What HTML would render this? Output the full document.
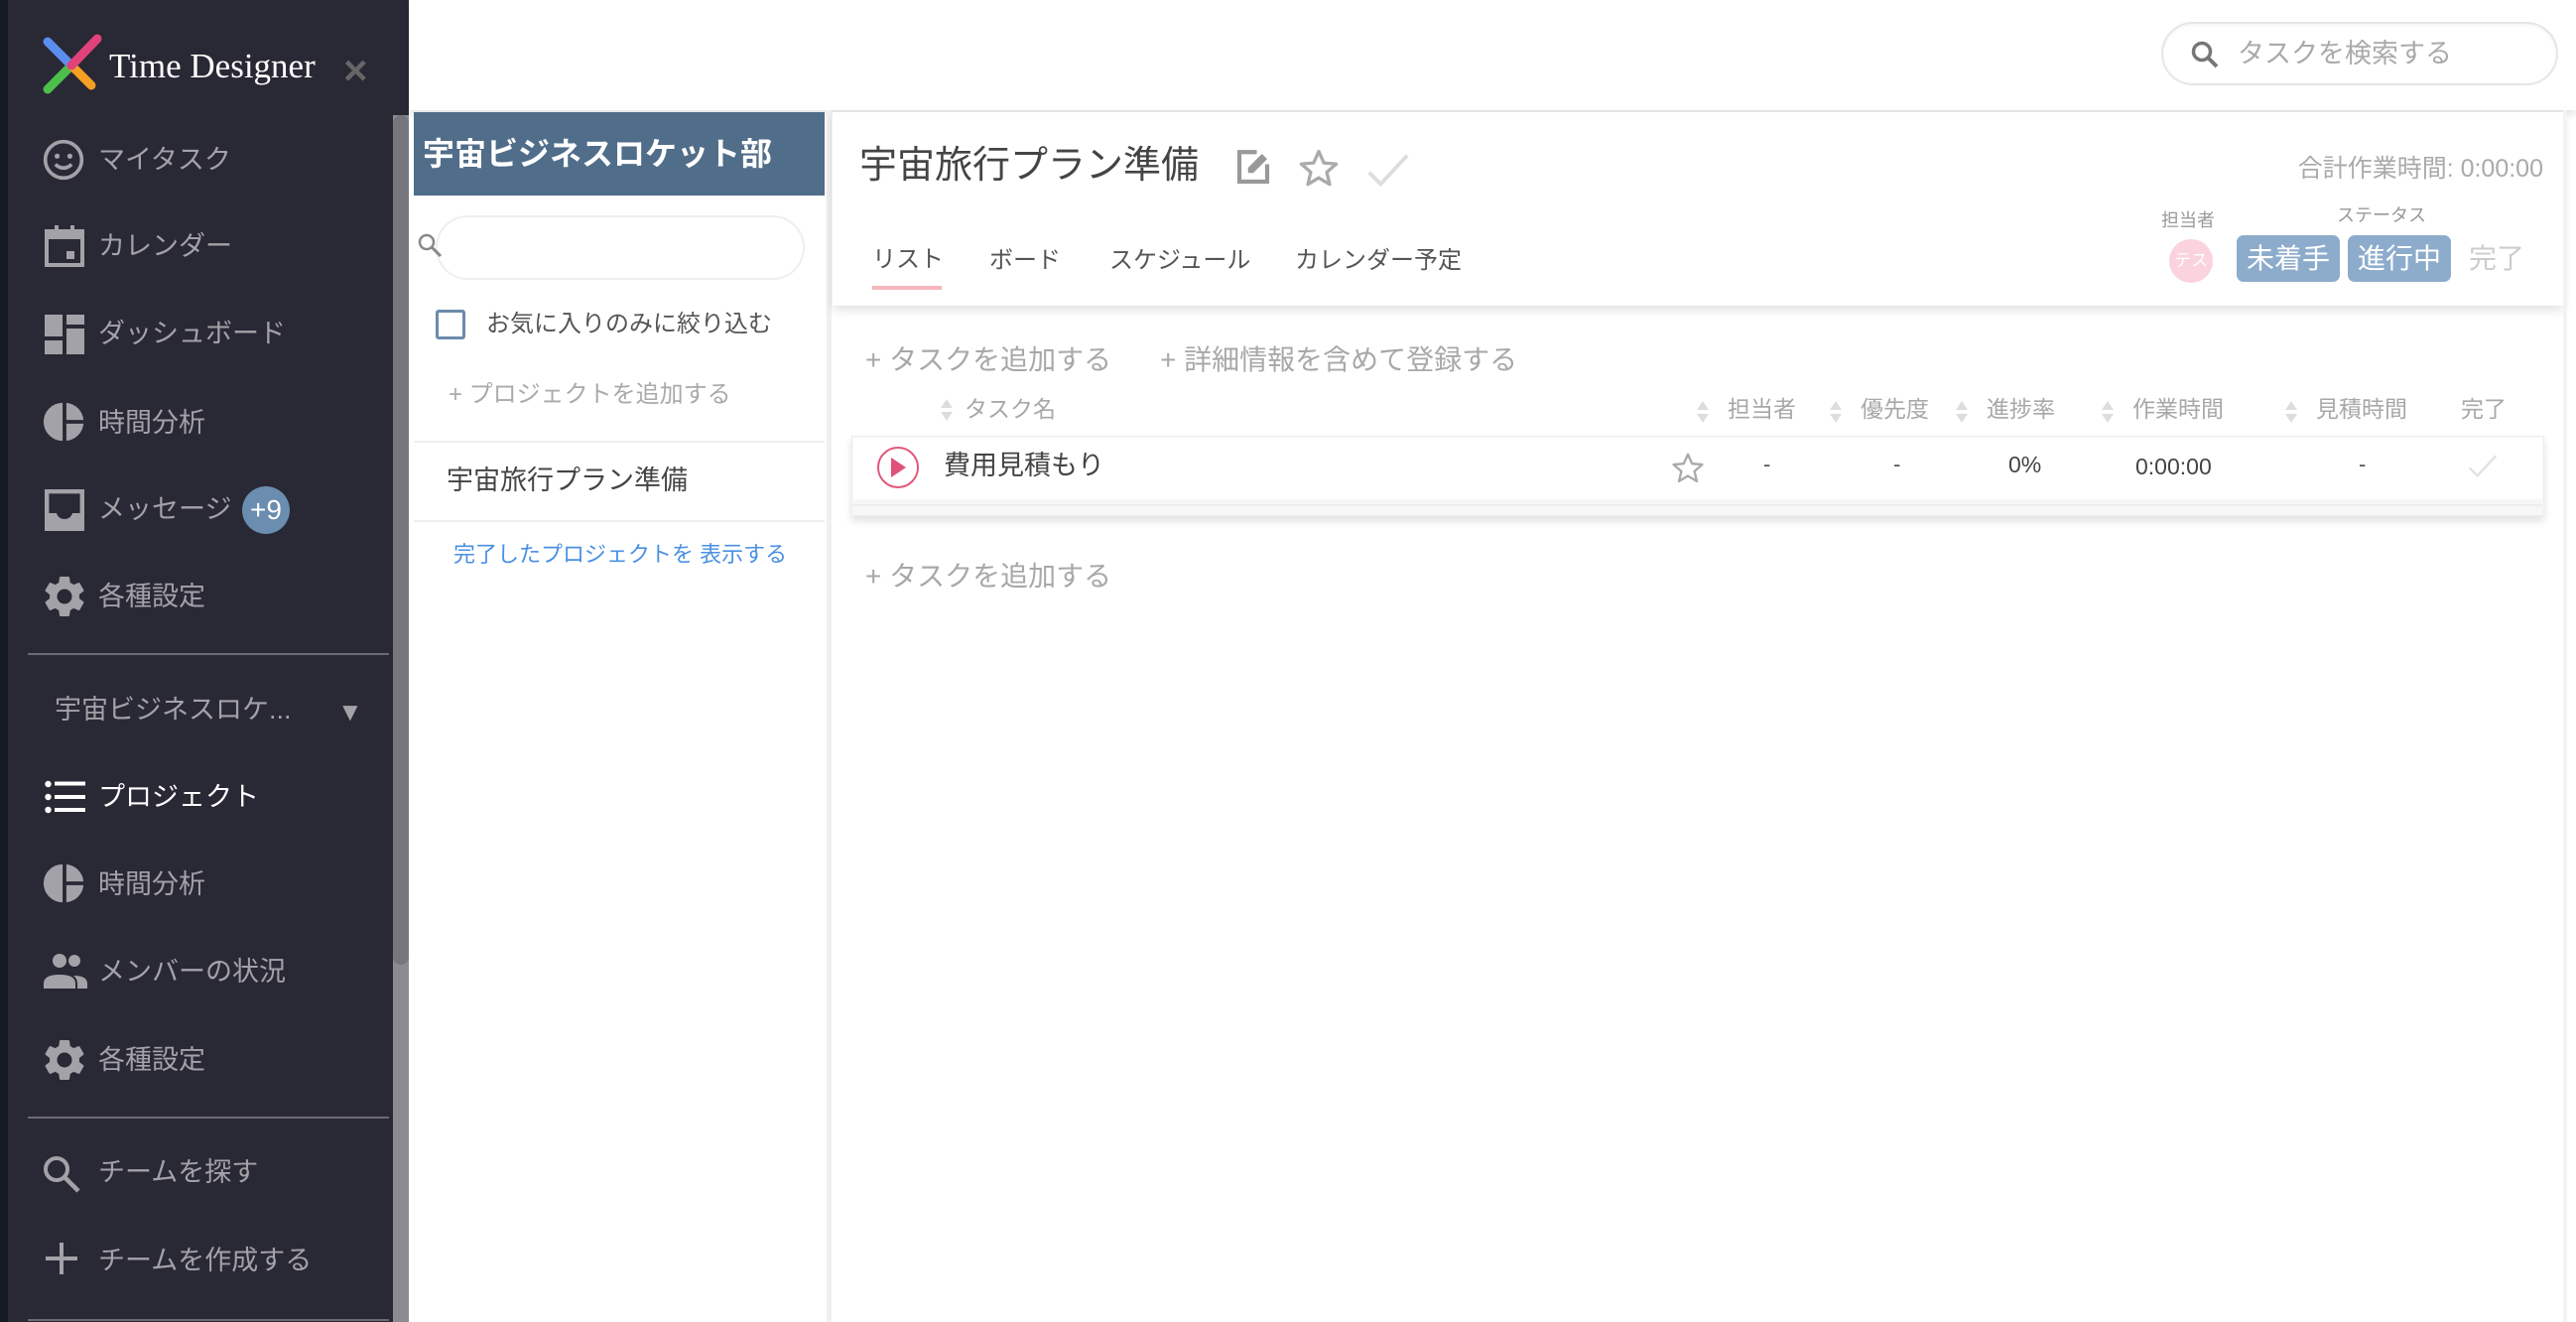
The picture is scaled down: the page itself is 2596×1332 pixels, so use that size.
<!DOCTYPE html>
<html><head><meta charset="utf-8">
<style>
*{margin:0;padding:0;box-sizing:border-box}
body{width:2596px;height:1332px;overflow:hidden;background:#fff;position:relative;font-family:"Liberation Sans","Noto Sans CJK JP",sans-serif}
.a{position:absolute;white-space:nowrap;line-height:1}
.side{position:absolute;left:0;top:0;width:412px;height:1332px;background:#292835}
.strip{position:absolute;left:0;top:0;width:8px;height:1332px;background:#151a24}
.mi{color:#a3a2a8;font-size:27px}
.ic{position:absolute}
.g{color:#a8a8a8}
.sort{position:absolute;width:14px;height:26px}
</style></head><body>
<div class="side"></div><div class="strip"></div>
<div class="a" style="left:396px;top:116px;width:16px;height:1216px;background:#8c8b91"></div>
<div class="a" style="left:396px;top:116px;width:16px;height:856px;background:#77767d;border-radius:8px"></div>
<svg class="ic" style="left:40px;top:34px" width="66" height="64" viewBox="0 0 66 64">
<line x1="8" y1="56" x2="32" y2="32" stroke="#4cc04a" stroke-width="9" stroke-linecap="round"/>
<line x1="8" y1="8" x2="32" y2="32" stroke="#5b8def" stroke-width="9" stroke-linecap="round"/>
<line x1="32" y1="32" x2="52" y2="52" stroke="#f5a023" stroke-width="9" stroke-linecap="round"/>
<line x1="32" y1="32" x2="58" y2="5" stroke="#e0427a" stroke-width="9" stroke-linecap="round"/>
</svg>
<div class="a" style="left:110px;top:49px;font-family:'Liberation Serif',serif;font-size:35px;color:#fff">Time Designer</div>
<div class="a" style="left:346px;top:50px;font-size:42px;color:#666;font-weight:bold">×</div>
<svg class="ic" style="left:42px;top:139px" width="44" height="44" viewBox="0 0 24 24"><circle cx="12" cy="12" r="10" fill="none" stroke="#a3a2a8" stroke-width="2"/><circle cx="8.5" cy="10" r="1.4" fill="#a3a2a8"/><circle cx="15.5" cy="10" r="1.4" fill="#a3a2a8"/><path d="M7.5 14.5q4.5 4 9 0" stroke="#a3a2a8" stroke-width="2" fill="none"/></svg>
<div class="a mi" style="left:99px;top:148px">マイタスク</div>
<svg class="ic" style="left:45px;top:227px" width="40" height="42" viewBox="0 0 20 21"><rect x="1" y="3" width="18" height="17" fill="none" stroke="#a3a2a8" stroke-width="2"/><rect x="1" y="3" width="18" height="4" fill="#a3a2a8"/><rect x="5" y="0" width="2" height="4" fill="#a3a2a8"/><rect x="13" y="0" width="2" height="4" fill="#a3a2a8"/><rect x="11" y="13" width="4" height="4" fill="#a3a2a8"/></svg>
<div class="a mi" style="left:99px;top:235px">カレンダー</div>
<svg class="ic" style="left:45px;top:317px" width="40" height="40" viewBox="0 0 20 20" fill="#a3a2a8"><rect x="0" y="0" width="9" height="11"/><rect x="11" y="0" width="9" height="5"/><rect x="11" y="7" width="9" height="13"/><rect x="0" y="13" width="9" height="7"/></svg>
<div class="a mi" style="left:99px;top:323px">ダッシュボード</div>
<svg class="ic" style="left:42px;top:402px" width="46" height="46" viewBox="0 0 24 24" fill="#a3a2a8"><path d="M11 2v20A10 10 0 0 1 11 2z"/><path d="M13 2A10 10 0 0 1 22 11h-9z"/><path d="M13 13h9A10 10 0 0 1 13 22z"/></svg>
<div class="a mi" style="left:99px;top:413px">時間分析</div>
<svg class="ic" style="left:45px;top:493px" width="40" height="42" viewBox="0 0 20 21"><path d="M1 1h18v19H1z" fill="none" stroke="#a3a2a8" stroke-width="2.4"/><path d="M1 12h5q1 3 4 3t4-3h5v8H1z" fill="#a3a2a8"/></svg>
<div class="a mi" style="left:99px;top:500px">メッセージ</div>
<div class="a" style="left:244px;top:490px;width:48px;height:48px;border-radius:50%;background:#6a8db0;color:#fff;font-size:28px;text-align:center;line-height:48px">+9</div>
<svg class="ic" style="left:40px;top:576px" width="50" height="50" viewBox="0 0 24 24" fill="#a3a2a8"><path d="M19.14 12.94a7.1 7.1 0 0 0 0-1.88l2.03-1.58a.5.5 0 0 0 .12-.61l-1.92-3.32a.5.5 0 0 0-.59-.22l-2.39.96a7 7 0 0 0-1.62-.94l-.36-2.54A.5.5 0 0 0 13.92 2.4h-3.84a.5.5 0 0 0-.49.42l-.36 2.54a7.4 7.4 0 0 0-1.62.94l-2.39-.96a.5.5 0 0 0-.59.22L2.71 8.88a.5.5 0 0 0 .12.61l2.03 1.58a7.1 7.1 0 0 0 0 1.88l-2.03 1.58a.5.5 0 0 0-.12.61l1.92 3.32a.5.5 0 0 0 .59.22l2.39-.96c.5.38 1.04.7 1.62.94l.36 2.54a.5.5 0 0 0 .49.42h3.84a.5.5 0 0 0 .49-.42l.36-2.54a7.4 7.4 0 0 0 1.62-.94l2.39.96a.5.5 0 0 0 .59-.22l1.92-3.32a.5.5 0 0 0-.12-.61zM12 15.6a3.6 3.6 0 1 1 0-7.2 3.6 3.6 0 0 1 0 7.2z"/></svg>
<div class="a mi" style="left:99px;top:588px">各種設定</div>
<div class="a" style="left:28px;top:658px;width:364px;height:2px;background:#6c6b72"></div>
<div class="a mi" style="left:55px;top:702px">宇宙ビジネスロケ...</div>
<div class="a" style="left:340px;top:704px;font-size:26px;color:#a3a2a8">▼</div>
<svg class="ic" style="left:45px;top:786px" width="42" height="34" viewBox="0 0 42 34" fill="#fff"><circle cx="3.5" cy="4" r="3.2"/><circle cx="3.5" cy="17" r="3.2"/><circle cx="3.5" cy="30" r="3.2"/><rect x="10" y="1.5" width="31" height="4"/><rect x="10" y="15" width="31" height="4"/><rect x="10" y="28" width="31" height="4"/></svg>
<div class="a mi" style="left:99px;top:790px;color:#fff">プロジェクト</div>
<svg class="ic" style="left:42px;top:867px" width="46" height="46" viewBox="0 0 24 24" fill="#a3a2a8"><path d="M11 2v20A10 10 0 0 1 11 2z"/><path d="M13 2A10 10 0 0 1 22 11h-9z"/><path d="M13 13h9A10 10 0 0 1 13 22z"/></svg>
<div class="a mi" style="left:99px;top:878px">時間分析</div>
<svg class="ic" style="left:43px;top:960px" width="46" height="36" viewBox="0 0 46 36" fill="#a3a2a8"><circle cx="17" cy="8" r="7"/><circle cx="32" cy="8" r="6"/><path d="M1 36v-5q0-9 16-9t16 9v5z"/><path d="M35 36v-5q0-5-4-8 14 0 14 8v5z"/></svg>
<div class="a mi" style="left:99px;top:966px">メンバーの状況</div>
<svg class="ic" style="left:40px;top:1043px" width="50" height="50" viewBox="0 0 24 24" fill="#a3a2a8"><path d="M19.14 12.94a7.1 7.1 0 0 0 0-1.88l2.03-1.58a.5.5 0 0 0 .12-.61l-1.92-3.32a.5.5 0 0 0-.59-.22l-2.39.96a7 7 0 0 0-1.62-.94l-.36-2.54A.5.5 0 0 0 13.920 2.4h-3.84a.5.5 0 0 0-.49.42l-.36 2.54a7.4 7.4 0 0 0-1.62.94l-2.39-.96a.5.5 0 0 0-.59.22L2.71 8.88a.5.5 0 0 0 .12.61l2.03 1.58a7.1 7.1 0 0 0 0 1.88l-2.03 1.58a.5.5 0 0 0-.12.61l1.92 3.32a.5.5 0 0 0 .59.22l2.39-.96c.5.38 1.04.7 1.62.94l.36 2.54a.5.5 0 0 0 .49.42h3.84a.5.5 0 0 0 .49-.42l.36-2.54a7.4 7.4 0 0 0 1.62-.94l2.39.96a.5.5 0 0 0 .59-.22l1.92-3.32a.5.5 0 0 0-.12-.61zM12 15.6a3.6 3.6 0 1 1 0-7.2 3.6 3.6 0 0 1 0 7.2z"/></svg>
<div class="a mi" style="left:99px;top:1055px">各種設定</div>
<div class="a" style="left:28px;top:1125px;width:364px;height:2px;background:#6c6b72"></div>
<svg class="ic" style="left:42px;top:1163px" width="40" height="40" viewBox="0 0 40 40"><circle cx="15" cy="15" r="11" fill="none" stroke="#a3a2a8" stroke-width="4"/><line x1="23" y1="23" x2="37" y2="37" stroke="#a3a2a8" stroke-width="4.5"/></svg>
<div class="a mi" style="left:99px;top:1168px">チームを探す</div>
<svg class="ic" style="left:46px;top:1252px" width="32" height="32" viewBox="0 0 32 32" fill="#a3a2a8"><rect x="14" y="0" width="4" height="32"/><rect x="0" y="14" width="32" height="4"/></svg>
<div class="a mi" style="left:99px;top:1257px">チームを作成する</div>
<div class="a" style="left:28px;top:1329px;width:364px;height:2px;background:#6c6b72"></div>

<div class="a" style="left:412px;top:0;width:2184px;height:111px;background:#fff;box-shadow:0 4px 8px rgba(0,0,0,.12)"></div>
<div class="a" style="left:2178px;top:22px;width:400px;height:64px;border:2px solid #e6e6e6;border-radius:32px;box-shadow:inset 0 1px 3px rgba(0,0,0,.06)"></div>
<svg class="ic" style="left:2207px;top:40px" width="30" height="30" viewBox="0 0 30 30"><circle cx="12" cy="12" r="8.5" fill="none" stroke="#777" stroke-width="3.5"/><line x1="18" y1="18" x2="27" y2="27" stroke="#777" stroke-width="4"/></svg>
<div class="a" style="left:2255px;top:41px;font-size:27px;color:#aaa">タスクを検索する</div>

<div class="a" style="left:417px;top:113px;width:414px;height:84px;background:#506d89"></div>
<div class="a" style="left:426px;top:139px;font-size:32px;font-weight:bold;color:#fff">宇宙ビジネスロケット部</div>
<div class="a" style="left:439px;top:217px;width:372px;height:65px;border:2px solid #eee;border-radius:33px"></div>
<svg class="ic" style="left:420px;top:234px" width="30" height="30" viewBox="0 0 30 30"><circle cx="10" cy="10" r="7" fill="none" stroke="#888" stroke-width="2.5"/><line x1="15" y1="15" x2="24" y2="24" stroke="#888" stroke-width="3"/></svg>
<div class="a" style="left:439px;top:312px;width:30px;height:30px;border:3px solid #6c8bab;border-radius:3px"></div>
<div class="a" style="left:490px;top:315px;font-size:24px;color:#555">お気に入りのみに絞り込む</div>
<div class="a" style="left:452px;top:386px;font-size:24px;color:#aaa">+ プロジェクトを追加する</div>
<div class="a" style="left:417px;top:444px;width:414px;height:2px;background:#eee"></div>
<div class="a" style="left:450px;top:471px;font-size:27px;color:#444">宇宙旅行プラン準備</div>
<div class="a" style="left:417px;top:524px;width:414px;height:2px;background:#eee"></div>
<div class="a" style="left:457px;top:548px;font-size:22px;color:#4a90e2">完了したプロジェクトを 表示する</div>
<div class="a" style="left:833px;top:111px;width:5px;height:1221px;background:#f0f0f0"></div>

<div class="a" style="left:839px;top:113px;width:1744px;height:195px;background:#fff;box-shadow:0 4px 10px rgba(0,0,0,.13)"></div>
<div class="a" style="left:2583px;top:111px;width:4px;height:1221px;background:#f3f3f3"></div>
<div class="a" style="left:866px;top:148px;font-size:38px;color:#444">宇宙旅行プラン準備</div>
<svg class="ic" style="left:1242px;top:148px" width="42" height="42" viewBox="0 0 24 24"><path d="M14 3H4v17h16V10" fill="none" stroke="#999" stroke-width="2.4"/><path d="M9 15v-3l8-8 3 3-8 8z" fill="#999"/></svg>
<svg class="ic" style="left:1306px;top:148px" width="46" height="44" viewBox="0 0 24 24"><path d="M12 2.5l2.8 6.3 6.8.6-5.2 4.5 1.6 6.7L12 17l-6 3.6 1.6-6.7L2.4 9.4l6.8-.6z" fill="none" stroke="#aaa" stroke-width="1.8" stroke-linejoin="round"/></svg>
<svg class="ic" style="left:1376px;top:152px" width="46" height="40" viewBox="0 0 24 20"><path d="M2 11l6 6L22 2" fill="none" stroke="#ddd" stroke-width="2"/></svg>
<div class="a" style="left:2250px;top:158px;width:313px;text-align:right;font-size:25px;color:#aaa">合計作業時間: 0:00:00</div>
<div class="a" style="left:879px;top:250px;font-size:24px;color:#555">リスト</div>
<div class="a" style="left:879px;top:288px;width:70px;height:4px;background:#f5b6be"></div>
<div class="a" style="left:997px;top:251px;font-size:24px;color:#555">ボード</div>
<div class="a" style="left:1118px;top:251px;font-size:24px;color:#555">スケジュール</div>
<div class="a" style="left:1305px;top:251px;font-size:24px;color:#555">カレンダー予定</div>
<div class="a" style="left:2178px;top:213px;font-size:18px;color:#999">担当者</div>
<div class="a" style="left:2355px;top:208px;font-size:18px;color:#999">ステータス</div>
<div class="a" style="left:2186px;top:241px;width:44px;height:44px;border-radius:50%;background:#fad3de;color:#fff;font-size:17px;text-align:center;line-height:44px">テス</div>
<div class="a" style="left:2254px;top:237px;width:104px;height:47px;border-radius:7px;background:#8daccc;color:#fff;font-size:28px;text-align:center;line-height:47px">未着手</div>
<div class="a" style="left:2366px;top:237px;width:104px;height:47px;border-radius:7px;background:#8daccc;color:#fff;font-size:28px;text-align:center;line-height:47px">進行中</div>
<div class="a" style="left:2488px;top:247px;font-size:28px;color:#ccc">完了</div>

<div class="a g" style="left:872px;top:349px;font-size:28px">+ タスクを追加する</div>
<div class="a g" style="left:1169px;top:349px;font-size:28px">+ 詳細情報を含めて登録する</div>
<svg class="sort" style="left:947px;top:400px" viewBox="0 0 14 26"><path d="M7 2l6 9H1zM7 24l6-9H1z" fill="#ddd"/></svg>
<div class="a g" style="left:972px;top:401px;font-size:23px">タスク名</div>
<svg class="sort" style="left:1709px;top:402px" viewBox="0 0 14 26"><path d="M7 2l6 9H1zM7 24l6-9H1z" fill="#ddd"/></svg>
<div class="a g" style="left:1741px;top:401px;font-size:23px">担当者</div>
<svg class="sort" style="left:1843px;top:402px" viewBox="0 0 14 26"><path d="M7 2l6 9H1zM7 24l6-9H1z" fill="#ddd"/></svg>
<div class="a g" style="left:1875px;top:401px;font-size:23px">優先度</div>
<svg class="sort" style="left:1970px;top:402px" viewBox="0 0 14 26"><path d="M7 2l6 9H1zM7 24l6-9H1z" fill="#ddd"/></svg>
<div class="a g" style="left:2002px;top:401px;font-size:23px">進捗率</div>
<svg class="sort" style="left:2117px;top:402px" viewBox="0 0 14 26"><path d="M7 2l6 9H1zM7 24l6-9H1z" fill="#ddd"/></svg>
<div class="a g" style="left:2149px;top:401px;font-size:23px">作業時間</div>
<svg class="sort" style="left:2302px;top:402px" viewBox="0 0 14 26"><path d="M7 2l6 9H1zM7 24l6-9H1z" fill="#ddd"/></svg>
<div class="a g" style="left:2334px;top:401px;font-size:23px">見積時間</div>
<div class="a g" style="left:2480px;top:401px;font-size:23px">完了</div>

<div class="a" style="left:858px;top:439px;width:1706px;height:81px;background:#f7f7f7;box-shadow:0 5px 8px rgba(0,0,0,.12);border:1px solid #eee"></div>
<div class="a" style="left:860px;top:441px;width:1702px;height:62px;background:#fff"></div>
<div class="a" style="left:860px;top:508px;width:1702px;height:2px;background:#eee"></div>
<svg class="ic" style="left:883px;top:449px" width="44" height="44" viewBox="0 0 44 44"><circle cx="22" cy="22" r="20" fill="#fff" stroke="#e2567a" stroke-width="2"/><path d="M15 12l15 10-15 10z" fill="#e0507a"/></svg>
<div class="a" style="left:951px;top:456px;font-size:27px;color:#444">費用見積もり</div>
<svg class="ic" style="left:1683px;top:454px" width="36" height="36" viewBox="0 0 24 24"><path d="M12 2.5l2.8 6.3 6.8.6-5.2 4.5 1.6 6.7L12 17l-6 3.6 1.6-6.7L2.4 9.4l6.8-.6z" fill="none" stroke="#aaa" stroke-width="1.6" stroke-linejoin="round"/></svg>
<div class="a" style="left:1777px;top:457px;font-size:22px;color:#555">-</div>
<div class="a" style="left:1908px;top:457px;font-size:22px;color:#555">-</div>
<div class="a" style="left:2024px;top:457px;font-size:23px;color:#444">0%</div>
<div class="a" style="left:2152px;top:459px;font-size:23px;color:#444">0:00:00</div>
<div class="a" style="left:2377px;top:457px;font-size:22px;color:#555">-</div>
<svg class="ic" style="left:2486px;top:456px" width="32" height="28" viewBox="0 0 24 20"><path d="M2 11l6 6L22 2" fill="none" stroke="#e2e2e2" stroke-width="1.8"/></svg>

<div class="a g" style="left:872px;top:567px;font-size:28px">+ タスクを追加する</div>
</body></html>
